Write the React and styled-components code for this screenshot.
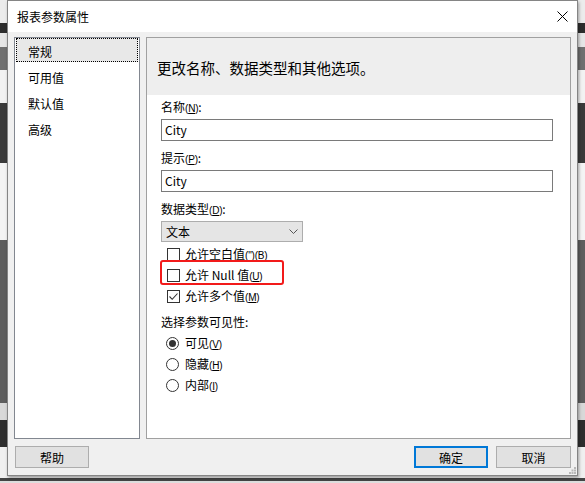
import styled, { createGlobalStyle } from "styled-components"

const GlobalStyle = createGlobalStyle`
  html, body {
    margin: 0;
    padding: 0;
  }
  body {
    width: 585px;
    height: 483px;
    overflow: hidden;
    font-family: "Noto Sans CJK SC", "Noto Sans", sans-serif;
    font-size: 12px;
    color: #000;
    background: linear-gradient(
      to bottom,
      #ececec 0px, #ececec 23px,
      #2d2d2d 23px, #2d2d2d 33px,
      #e6e6e6 33px, #e6e6e6 47px,
      #707070 47px, #707070 70px,
      #f2f2f2 70px, #f2f2f2 103px,
      #3a3a3a 103px, #3a3a3a 163px,
      #f4f4f4 163px, #f4f4f4 240px,
      #5e5e5e 240px, #5e5e5e 403px,
      #d8d8d8 403px, #d8d8d8 420px,
      #2e2e2e 420px, #2e2e2e 447px,
      #f0f0f0 447px, #f0f0f0 478px,
      #444 478px, #444 481px,
      #ddd 481px
    );
  }
`

const Page = styled.div`
  padding-left: 7px;
  height: 483px;
  box-sizing: border-box;
`

const Dialog = styled.div`
  position: relative;
  width: 571px;
  height: 476px;
  box-sizing: border-box;
  border: 1px solid #858585;
  background: #f0f0f0;
  display: flex;
  flex-direction: column;
  box-shadow: 1px 2px 3px rgba(0, 0, 0, 0.35);
`

const TitleBar = styled.div`
  height: 31px;
  background: #fff;
  display: flex;
  align-items: center;
  justify-content: space-between;
  padding: 0 9px 0 9px;
  font-size: 12px;
`

const Body = styled.div`
  display: flex;
  gap: 6px;
  padding: 5px 6px 0 6px;
  height: 407px;
  box-sizing: border-box;
`

const NavList = styled.div`
  width: 126px;
  height: 402px;
  box-sizing: border-box;
  border: 1px solid #828790;
  background: #fff;
  padding: 0 1px;
`

const NavItem = styled.div`
  height: 24px;
  margin-bottom: 2px;
  padding-left: 11px;
  line-height: 25px;
  box-sizing: border-box;
  border: 1px dotted ${(p) => (p.$active ? "#000" : "transparent")};
  background: ${(p) => (p.$active ? "#e8e8e8" : "transparent")};
`

const Panel = styled.div`
  width: 425px;
  height: 402px;
  box-sizing: border-box;
  border: 1px solid #a0a0a0;
  background: #fff;
  display: flex;
  flex-direction: column;
`

const PanelHeader = styled.div`
  height: 57px;
  background: #eeeeee;
  padding-left: 10px;
  display: flex;
  align-items: center;
  font-size: 14.5px;
  padding-top: 2px;
  box-sizing: border-box;
`

const Form = styled.div`
  padding: 2px 0 0 14px;
  display: flex;
  flex-direction: column;
  align-items: flex-start;
`

const Label = styled.div`
  height: 20px;
  line-height: 20px;
  margin-top: ${(p) => p.$top || 0}px;
  margin-bottom: ${(p) => p.$bottom ?? 2}px;
`

const Mn = styled.span`
  font-family: "Liberation Sans", sans-serif;
  font-size: 10px;
  letter-spacing: -0.2px;
  u {
    text-underline-offset: 1px;
  }
`

const TextInput = styled.div`
  width: 392px;
  height: 22px;
  box-sizing: border-box;
  border: 1px solid #7a7a7a;
  padding-left: 3px;
  line-height: 20px;
  font-size: 12px;
`

const Select = styled.div`
  width: 142px;
  height: 21px;
  box-sizing: border-box;
  border: 1px solid #adadad;
  background: #e5e5e5;
  display: flex;
  align-items: center;
  justify-content: space-between;
  padding: 0 4px 0 4px;
`

const OptionGroup = styled.div`
  display: flex;
  flex-direction: column;
  margin-top: ${(p) => p.$top || 0}px;
  padding-left: ${(p) => p.$indent}px;
`

const OptionRow = styled.div`
  position: relative;
  height: 21px;
  display: flex;
  align-items: center;
  gap: ${(p) => p.$gap}px;
  line-height: 21px;
`

const Box = styled.div`
  width: 13px;
  height: 13px;
  box-sizing: border-box;
  border: 1px solid #333;
  background: #fff;
  display: flex;
  align-items: center;
  justify-content: center;
`

const Radio = styled(Box)`
  border-radius: 50%;
  &::after {
    content: "";
    display: ${(p) => (p.$checked ? "block" : "none")};
    width: 7px;
    height: 7px;
    border-radius: 50%;
    background: #333;
  }
`

const Highlight = styled.div`
  position: absolute;
  left: -7px;
  top: -5px;
  width: 124px;
  height: 25px;
  box-sizing: border-box;
  border: 2px solid #f21a1a;
  border-radius: 3px;
  pointer-events: none;
`

const Footer = styled.div`
  display: flex;
  justify-content: space-between;
  padding: 7px 6px 0 7px;
`

const ButtonGroup = styled.div`
  display: flex;
  gap: 8px;
`

const Button = styled.div`
  width: ${(p) => p.$w || 74}px;
  height: 22px;
  box-sizing: border-box;
  background: #e1e1e1;
  border: ${(p) => (p.$default ? "2px solid #0078d7" : "1px solid #adadad")};
  display: flex;
  align-items: center;
  justify-content: center;
  font-size: 12px;
`

const Grip = styled.svg`
  position: absolute;
  right: 1px;
  bottom: 1px;
`

const Close = () => (
  <svg width="11" height="11" viewBox="0 0 11 11">
    <path d="M0.5 0.5 L10.5 10.5 M10.5 0.5 L0.5 10.5" stroke="#000" strokeWidth="1" fill="none" />
  </svg>
)

const Chevron = () => (
  <svg width="9" height="5" viewBox="0 0 9 5">
    <path d="M0.5 0.5 L4.5 4.5 L8.5 0.5" stroke="#555" strokeWidth="1" fill="none" />
  </svg>
)

const Check = () => (
  <svg width="11" height="11" viewBox="0 0 11 11">
    <path d="M1.5 5.5 L4.2 8.3 L9.5 2.5" stroke="#333" strokeWidth="1.1" fill="none" />
  </svg>
)

const Checkbox = ({ checked, children, mark }) => (
  <OptionRow $gap={5}>
    {mark && <Highlight />}
    <Box>{checked && <Check />}</Box>
    <span>{children}</span>
  </OptionRow>
)

const RadioOption = ({ checked, children }) => (
  <OptionRow $gap={6}>
    <Radio $checked={checked} />
    <span>{children}</span>
  </OptionRow>
)

const App = () => {
  return (
    <Page>
      <GlobalStyle />
      <Dialog>
        <TitleBar>
          <span>报表参数属性</span>
          <Close />
        </TitleBar>
        <Body>
          <NavList>
            <NavItem $active>常规</NavItem>
            <NavItem>可用值</NavItem>
            <NavItem>默认值</NavItem>
            <NavItem>高级</NavItem>
          </NavList>
          <Panel>
            <PanelHeader>更改名称、数据类型和其他选项。</PanelHeader>
            <Form>
              <Label>名称<Mn>(<u>N</u>)</Mn>:</Label>
              <TextInput>City</TextInput>
              <Label $top={7}>提示<Mn>(<u>P</u>)</Mn>:</Label>
              <TextInput>City</TextInput>
              <Label $top={7}>数据类型<Mn>(<u>D</u>)</Mn>:</Label>
              <Select>
                <span>文本</span>
                <Chevron />
              </Select>
              <OptionGroup $top={2} $indent={6}>
                <Checkbox>允许空白值<Mn>(<u>"</u>)(B)</Mn></Checkbox>
                <Checkbox mark>允许 Null 值<Mn>(<u>U</u>)</Mn></Checkbox>
                <Checkbox checked>允许多个值<Mn>(<u>M</u>)</Mn></Checkbox>
              </OptionGroup>
              <Label $top={5} $bottom={1}>选择参数可见性:</Label>
              <OptionGroup $indent={5}>
                <RadioOption checked>可见<Mn>(<u>V</u>)</Mn></RadioOption>
                <RadioOption>隐藏<Mn>(<u>H</u>)</Mn></RadioOption>
                <RadioOption>内部<Mn>(<u>I</u>)</Mn></RadioOption>
              </OptionGroup>
            </Form>
          </Panel>
        </Body>
        <Footer>
          <Button>帮助</Button>
          <ButtonGroup>
            <Button $default>确定</Button>
            <Button $w={75}>取消</Button>
          </ButtonGroup>
        </Footer>
        <Grip width="7" height="7" viewBox="0 0 7 7">
          <rect x="5" y="0" width="2" height="2" fill="#b8b8b8" />
          <rect x="2.5" y="2.5" width="2" height="2" fill="#b8b8b8" />
          <rect x="5" y="2.5" width="2" height="2" fill="#b8b8b8" />
          <rect x="0" y="5" width="2" height="2" fill="#b8b8b8" />
          <rect x="2.5" y="5" width="2" height="2" fill="#b8b8b8" />
          <rect x="5" y="5" width="2" height="2" fill="#b8b8b8" />
        </Grip>
      </Dialog>
    </Page>
  )
}

export default App
